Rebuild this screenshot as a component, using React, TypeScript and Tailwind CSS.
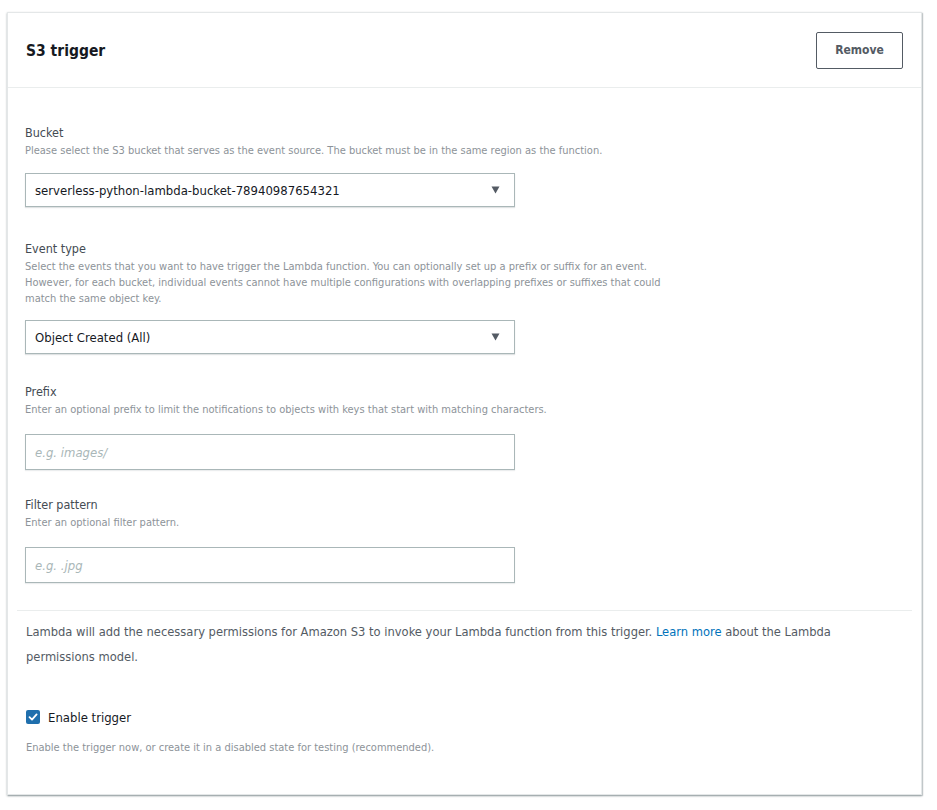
import React from "react";

function Caret() {
  return (
    <svg width="9" height="8" viewBox="0 0 9 8" className="shrink-0">
      <path d="M0.5 0.5 L8.5 0.5 L4.5 7.5 Z" fill="#545b64" />
    </svg>
  );
}

function Select({ value, mt }: { value: string; mt: string }) {
  return (
    <div className={`${mt} flex h-[34px] w-[490px] items-center justify-between border border-[#aab7b8] bg-white pl-[9px] pr-[14px] shadow-[0_1px_1px_0_rgba(0,28,36,0.12)]`}>
      <span className="text-[13px] leading-none text-[#16191f]">{value}</span>
      <Caret />
    </div>
  );
}

function TextInput({ placeholder }: { placeholder: string }) {
  return (
    <div className="mt-[16px] flex h-[36px] w-[490px] items-center border border-[#aab7b8] bg-white pl-[9px] shadow-[0_1px_1px_0_rgba(0,28,36,0.08)]">
      <span className="text-[13px] italic leading-none text-[#aab7b8]">{placeholder}</span>
    </div>
  );
}

export default function App() {
  return (
    <div className="min-h-[810px] bg-white pl-[7px] pr-[15px] pt-[12px] font-[family-name:DejaVu_Sans_Condensed,Roboto,sans-serif]">
      <div className="flex h-[783px] flex-col border border-[#e4e7e8] bg-white shadow-[0_1px_2px_0_rgba(0,28,36,0.35),1px_1px_1px_0_rgba(0,28,36,0.15)]">
        <div className="flex h-[75px] items-center justify-between border-b border-[#eaeded] pl-[18px] pr-[18px]">
          <h2 className="pt-[3px] text-[15.5px] font-bold leading-none text-[#16191f]">S3 trigger</h2>
          <button className="h-[37px] w-[87px] rounded-[2px] border border-[#545b64] bg-white text-[12px] font-bold text-[#545b64]">
            Remove
          </button>
        </div>

        <div className="px-[17px] pt-[35px]">
          <div className="text-[12.5px] leading-[20px] text-[#444b53]">Bucket</div>
          <div className="text-[11px] leading-[16px] text-[#8d9399]">
            Please select the S3 bucket that serves as the event source. The bucket must be in the same region as the function.
          </div>
          <Select mt="mt-[14px]" value="serverless-python-lambda-bucket-78940987654321" />

          <div className="mt-[32px] text-[12.5px] leading-[20px] text-[#444b53]">Event type</div>
          <div className="whitespace-nowrap text-[11px] leading-[16px] text-[#8d9399]">
            Select the events that you want to have trigger the Lambda function. You can optionally set up a prefix or suffix for an event.
            <br />
            However, for each bucket, individual events cannot have multiple configurations with overlapping prefixes or suffixes that could
            <br />
            match the same object key.
          </div>
          <Select mt="mt-[13px]" value="Object Created (All)" />

          <div className="mt-[28px] text-[12.5px] leading-[20px] text-[#444b53]">Prefix</div>
          <div className="text-[11px] leading-[16px] text-[#8d9399]">
            Enter an optional prefix to limit the notifications to objects with keys that start with matching characters.
          </div>
          <TextInput placeholder="e.g. images/" />

          <div className="mt-[25px] text-[12.5px] leading-[20px] text-[#444b53]">Filter pattern</div>
          <div className="text-[11px] leading-[16px] text-[#8d9399]">Enter an optional filter pattern.</div>
          <TextInput placeholder="e.g. .jpg" />
        </div>

        <div className="mx-[9px] mt-[27px] border-t border-[#eaeded]" />

        <div className="px-[18px] pt-[8px]">
          <p className="whitespace-nowrap text-[12.8px] leading-[25px] text-[#545b64]">
            Lambda will add the necessary permissions for Amazon S3 to invoke your Lambda function from this trigger.{" "}
            <span className="text-[#0073bb]">Learn more</span> about the Lambda
            <br />
            permissions model.
          </p>

          <div className="mt-[38px] flex h-[20px] items-center gap-[8px]">
            <span className="flex h-[14px] w-[14px] items-center justify-center rounded-[2px] bg-[#1f6fad]">
              <svg width="10" height="10" viewBox="0 0 10 10">
                <path d="M1.5 5.2 L4 7.6 L8.6 2.4" fill="none" stroke="white" strokeWidth="1.8" strokeLinecap="round" strokeLinejoin="round" />
              </svg>
            </span>
            <span className="text-[13px] leading-none text-[#16191f]">Enable trigger</span>
          </div>
          <div className="mt-[13px] text-[11px] leading-[16px] text-[#8d9399]">
            Enable the trigger now, or create it in a disabled state for testing (recommended).
          </div>
        </div>
      </div>
    </div>
  );
}
